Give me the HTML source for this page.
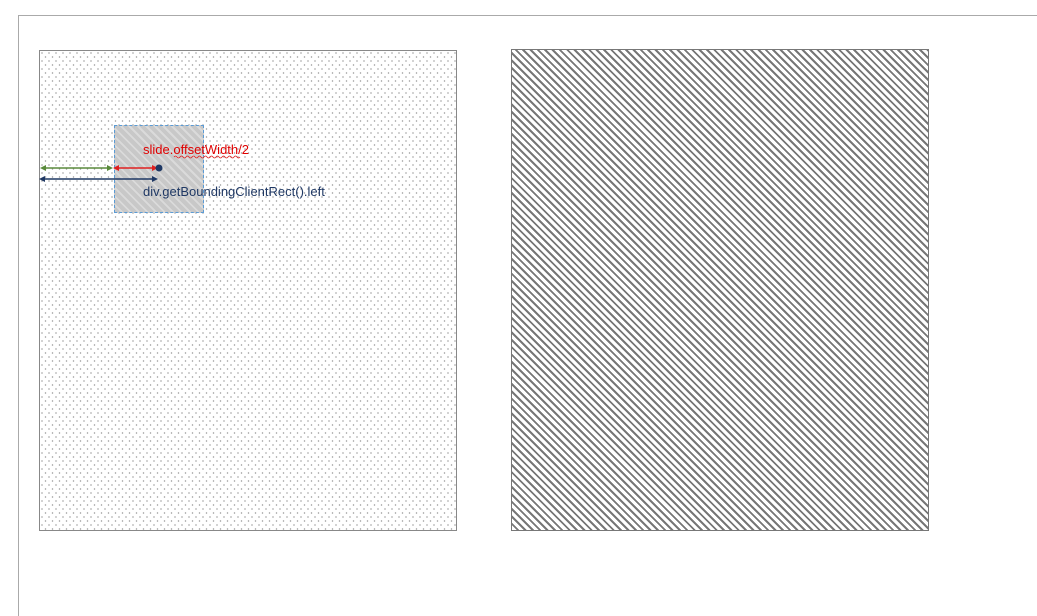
<!DOCTYPE html>
<html><head><style>
body{margin:0;width:1037px;height:578px;background:#fff;position:relative;overflow:hidden;font-family:"Liberation Sans",sans-serif}
.outer{position:absolute;left:18px;top:15px;width:1030px;height:600px;border-left:1px solid #aaa;border-top:1px solid #aaa}
.l{position:absolute;left:39px;top:50px;width:416px;height:479px;border:1px solid #888;
background-image:radial-gradient(circle,#999 0.6px,transparent 0.9px),radial-gradient(circle,#999 0.6px,transparent 0.9px);
background-size:7px 8px;background-position:2px 2px,5.5px 6px}
.r{position:absolute;left:511px;top:49px;width:416px;height:480px;border:1px solid #777;
background:repeating-linear-gradient(45deg,#fff 0,#fff 3.2px,#777 3.2px,#777 5.2px)}
.sq{position:absolute;left:114px;top:125px;width:88px;height:86px;border:1px dashed #5b9bd5;
background:repeating-linear-gradient(45deg,#c8c8c8 0,#c8c8c8 4px,#dadada 4px,#dadada 6px)}
.t{position:absolute;font-size:13px;font-family:"Liberation Sans",sans-serif}
</style></head><body>
<div class="outer"></div>
<div class="l"></div>
<div class="r"></div>
<div class="sq"></div>
<svg style="position:absolute;left:0;top:0" width="1037" height="578">
<line x1="44" y1="168" x2="109" y2="168" stroke="#5a8a3c" stroke-width="1.5"/>
<polygon points="40,168 46,165 46,171" fill="#5a8a3c"/>
<polygon points="113,168 107,165 107,171" fill="#5a8a3c"/>
<line x1="117" y1="168" x2="154" y2="168" stroke="#e02020" stroke-width="1.5"/>
<polygon points="113,168 119,165 119,171" fill="#e02020"/>
<polygon points="158,168 152,165 152,171" fill="#e02020"/>
<circle cx="159" cy="168" r="3.5" fill="#1f3864"/>
<line x1="44" y1="179" x2="154" y2="179" stroke="#1f3864" stroke-width="1.5"/>
<polygon points="39,179 45,176 45,182" fill="#1f3864"/>
<polygon points="158,179 152,176 152,182" fill="#1f3864"/>
<path d="M174 157 q1.5 -2 3 0 t3 0 t3 0 t3 0 t3 0 t3 0 t3 0 t3 0 t3 0 t3 0 t3 0 t3 0 t3 0 t3 0 t3 0 t3 0 t3 0 t3 0 t3 0 t3 0 t3 0 t3 0" fill="none" stroke="#e02020" stroke-width="0.8"/>
</svg>
<div class="t" style="left:143px;top:142px;color:#e00000">slide.offsetWidth/2</div>
<div class="t" style="left:143px;top:184px;color:#1f3864">div.getBoundingClientRect().left</div>
</body></html>
